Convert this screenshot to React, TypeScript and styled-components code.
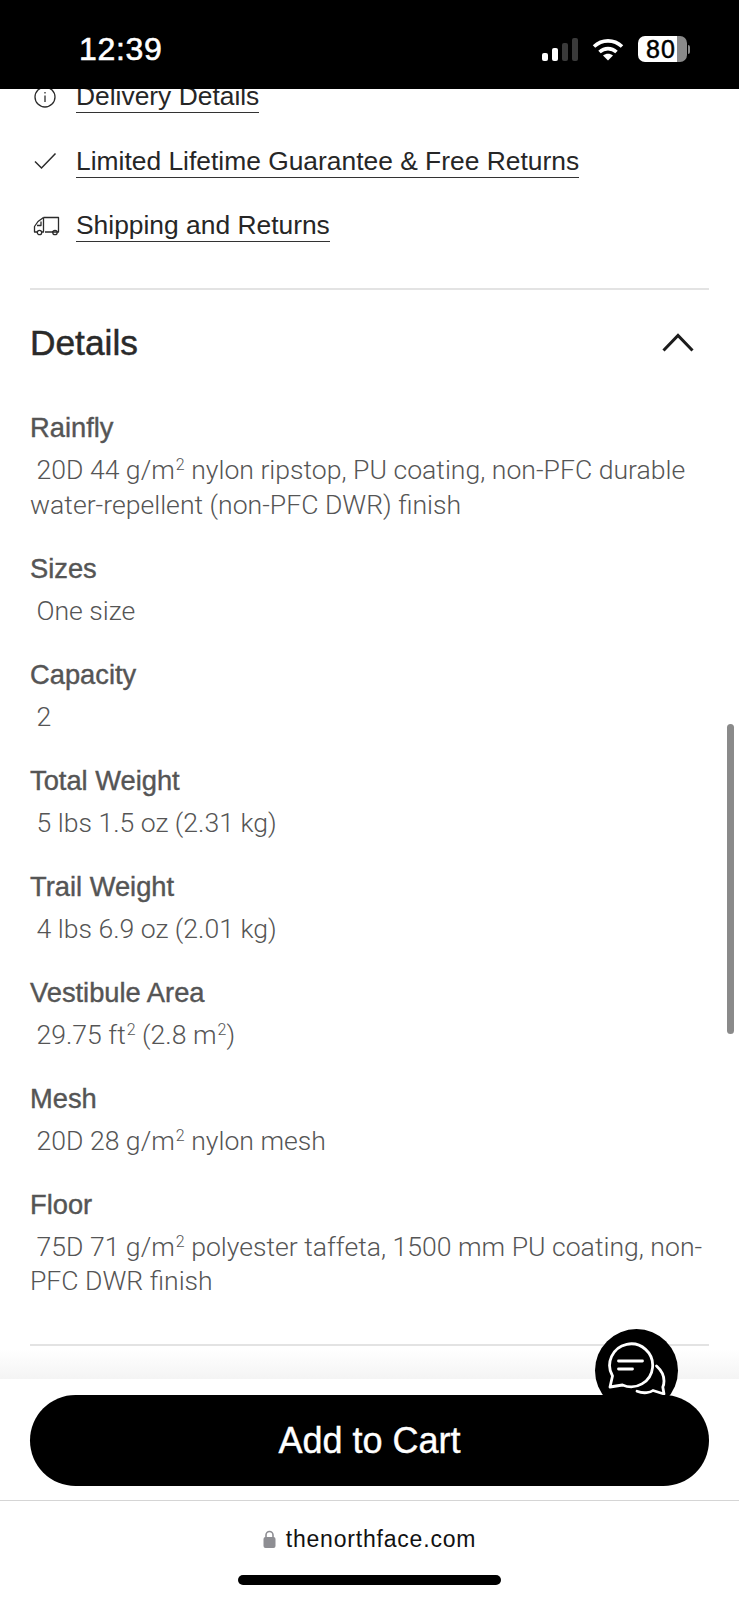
import React from 'react';
import styled, { createGlobalStyle } from 'styled-components';

const GlobalStyle = createGlobalStyle`
  html, body {
    margin: 0;
    padding: 0;
    background: #fff;
  }
  * {
    box-sizing: border-box;
  }
`;

interface ISpec {
  label: string;
  value: React.ReactNode;
}

const specs: ISpec[] = [
  {
    label: 'Rainfly',
    value: (
      <>
        {'\u00a0'}20D 44 g/m<sup>2</sup> nylon ripstop, PU coating, non-PFC durable water-repellent (non-PFC DWR) finish
      </>
    ),
  },
  { label: 'Sizes', value: '\u00a0One size' },
  { label: 'Capacity', value: '\u00a02' },
  { label: 'Total Weight', value: '\u00a05 lbs 1.5 oz (2.31 kg)' },
  { label: 'Trail Weight', value: '\u00a04 lbs 6.9 oz (2.01 kg)' },
  {
    label: 'Vestibule Area',
    value: (
      <>
        {'\u00a0'}29.75 ft<sup>2</sup> (2.8 m<sup>2</sup>)
      </>
    ),
  },
  {
    label: 'Mesh',
    value: (
      <>
        {'\u00a0'}20D 28 g/m<sup>2</sup> nylon mesh
      </>
    ),
  },
  {
    label: 'Floor',
    value: (
      <>
        {'\u00a0'}75D 71 g/m<sup>2</sup> polyester taffeta, 1500 mm PU coating, non-PFC DWR finish
      </>
    ),
  },
];

const InfoIcon = () => (
  <svg width="24" height="24" viewBox="0 0 24 24" fill="none" stroke="#2b2b2b" strokeWidth="1.3">
    <circle cx="12" cy="12" r="10" />
    <path d="M12 10.5v6.5" />
    <path d="M12 7v1.4" />
  </svg>
);

const CheckIcon = () => (
  <svg width="24" height="24" viewBox="0 0 24 24" fill="none" stroke="#2b2b2b" strokeWidth="1.5">
    <path d="M2 12.5l6.5 6.5L22.5 4.5" />
  </svg>
);

const TruckIcon = () => (
  <svg width="27" height="20" viewBox="0 0 27 20" fill="none" stroke="#2b2b2b" strokeWidth="1.3" strokeLinejoin="round">
    <path d="M10.5 1.5H25.5V16H12" />
    <path d="M10.5 1.5L5 5.5 1.5 10.5V16H4" />
    <path d="M10.5 1.5V16H9" />
    <path d="M4 9.5h4V5.5" />
    <path d="M20 16h-1" />
    <circle cx="6.5" cy="16.5" r="2.2" />
    <circle cx="22" cy="16.5" r="2.2" />
  </svg>
);

const ChevronIcon = () => (
  <svg width="32" height="19" viewBox="0 0 32 19" fill="none" stroke="#1c1c1c" strokeWidth="3">
    <path d="M1.5 17.5L16 2.5l14.5 15" />
  </svg>
);

const ChatIcon = () => (
  <svg width="60" height="60" viewBox="0 0 60 60" fill="none" stroke="#fff" strokeWidth="2.8" strokeLinejoin="round" strokeLinecap="round">
    <path d="M5.5 35A21.5 21.5 0 1 1 15.5 44L3 46z" />
    <path d="M11.5 20h24" />
    <path d="M11.5 28h14" />
    <path d="M49.5 25c4.5 4 7.5 10 7.5 15 0 2.500-.5 4.500-1.200 6L57 53l-11-3.500c-2.500 2-9 3.500-16 .8" />
  </svg>
);

const LockIcon = () => (
  <svg width="13" height="18" viewBox="0 0 13 18" fill="#8e8e93">
    <rect x="0.5" y="7" width="12" height="11" rx="2" />
    <path d="M3 8V5a3.500 3.500 0 017 0v3" fill="none" stroke="#8e8e93" strokeWidth="1.6" />
  </svg>
);

const WifiIcon = () => (
  <svg width="32" height="23" viewBox="0 0 32 23" fill="none" stroke="#fff" strokeWidth="3.6">
    <path d="M2 8.500C10 1 22 1 30 8.500" />
    <path d="M7.500 14c5-4.500 12-4.500 17 0" />
    <path d="M16 22.500l-5-5c3-2.400 7-2.400 10 0z" fill="#fff" stroke="none" />
  </svg>
);

export default function App() {
  return (
    <>
      <GlobalStyle />
      <Phone>
        <StatusBar>
          <Clock>12:39</Clock>
          <StatusIcons>
            <Signal>
              <SignalBar $height={8} $on />
              <SignalBar $height={13} $on />
              <SignalBar $height={18} />
              <SignalBar $height={23} />
            </Signal>
            <WifiIcon />
            <Battery>
              <BatteryBody>80</BatteryBody>
              <BatteryCap />
            </Battery>
          </StatusIcons>
        </StatusBar>

        <Content>
          <Links>
            <LinkRow>
              <LinkIcon>
                <InfoIcon />
              </LinkIcon>
              <LinkText>Delivery Details</LinkText>
            </LinkRow>
            <LinkRow>
              <LinkIcon>
                <CheckIcon />
              </LinkIcon>
              <LinkText>Limited Lifetime Guarantee &amp; Free Returns</LinkText>
            </LinkRow>
            <LinkRow>
              <LinkIcon>
                <TruckIcon />
              </LinkIcon>
              <LinkText>Shipping and Returns</LinkText>
            </LinkRow>
          </Links>

          <Section>
            <SectionHeader>
              <SectionTitle>Details</SectionTitle>
              <ChevronIcon />
            </SectionHeader>
            <SpecList>
              {specs.map(({ label, value }) => (
                <Spec key={label}>
                  <SpecLabel>{label}</SpecLabel>
                  <SpecValue>{value}</SpecValue>
                </Spec>
              ))}
            </SpecList>
          </Section>
          <EndRule />
          <ScrollThumb />
          <ChatButton>
            <ChatIcon />
          </ChatButton>
        </Content>

        <CartBar>
          <CartButton>Add to Cart</CartButton>
        </CartBar>

        <BrowserBar>
          <Address>
            <LockIcon />
            <span>thenorthface.com</span>
          </Address>
          <HomeIndicator />
        </BrowserBar>
      </Phone>
    </>
  );
}

const Phone = styled.div`
  width: 739px;
  height: 1600px;
  display: flex;
  flex-direction: column;
  overflow: hidden;
  background: #fff;
  font-family: 'Liberation Sans', Arial, sans-serif;
`;

const StatusBar = styled.header`
  flex: 0 0 89px;
  display: flex;
  align-items: center;
  justify-content: space-between;
  padding: 9px 49px 0 79px;
  background: #000;
  color: #fff;
  position: relative;
  z-index: 2;
`;

const Clock = styled.div`
  font-size: 32px;
  font-weight: 400;
  -webkit-text-stroke: 0.6px #fff;
  letter-spacing: 0.7px;
`;

const StatusIcons = styled.div`
  display: flex;
  align-items: center;
  gap: 14px;
`;

const Signal = styled.div`
  display: flex;
  align-items: flex-end;
  gap: 3.5px;
  height: 23px;
`;

const SignalBar = styled.span<{ $height: number; $on?: boolean }>`
  width: 6.5px;
  height: ${({ $height }) => $height}px;
  border-radius: 2px;
  background: ${({ $on }) => ($on ? '#fff' : '#3a3a3a')};
`;

const Battery = styled.div`
  display: flex;
  align-items: center;
  gap: 1px;
`;

const BatteryBody = styled.div`
  width: 49px;
  height: 26px;
  border-radius: 7px;
  background: linear-gradient(90deg, #fff 0 80%, #8a8a8a 80% 100%);
  color: #000;
  font-size: 25px;
  font-weight: 400;
  -webkit-text-stroke: 0.5px #000;
  letter-spacing: 1px;
  line-height: 26px;
  padding-left: 8px;
`;

const BatteryCap = styled.span`
  width: 2px;
  height: 9px;
  border-radius: 0 2px 2px 0;
  background: #8a8a8a;
`;

const Content = styled.main`
  flex: 1;
  min-height: 0;
  position: relative;
  padding: 0 30px;
  background: linear-gradient(180deg, #fff 0, #fff 1260px, #f4f4f4 100%);
`;

const Links = styled.div`
  display: flex;
  flex-direction: column;
  gap: 32px;
  margin-top: -8px;
  padding-bottom: 45.5px;
`;

const LinkRow = styled.div`
  display: flex;
  align-items: flex-start;
  height: 32.5px;
`;

const LinkIcon = styled.span`
  flex: 0 0 46px;
  height: 31px;
  display: flex;
  align-items: center;
  padding-left: 3px;
`;

const LinkText = styled.a`
  font-size: 26.4px;
  line-height: 31px;
  color: #262626;
  border-bottom: 1.5px solid #333;
`;

const Section = styled.section`
  border-top: 2px solid #e3e3e3;
`;

const SectionHeader = styled.div`
  display: flex;
  align-items: center;
  justify-content: space-between;
  height: 105px;
  margin-bottom: 18px;
  padding-right: 15px;
`;

const SectionTitle = styled.h2`
  margin: 0;
  font-size: 35.3px;
  font-weight: 400;
  -webkit-text-stroke: 0.5px #2a2a2a;
  color: #2a2a2a;
`;

const SpecList = styled.dl`
  margin: 0;
  display: flex;
  flex-direction: column;
  gap: 31.5px;
`;

const Spec = styled.div`
  display: flex;
  flex-direction: column;
  gap: 10px;
`;

const SpecLabel = styled.dt`
  font-size: 27.3px;
  line-height: 30px;
  color: #555;
  -webkit-text-stroke: 0.4px #555;
`;

const SpecValue = styled.dd`
  margin: 0;
  font-family: Roboto, 'Liberation Sans', sans-serif;
  font-weight: 300;
  font-size: 26.6px;
  line-height: 34.5px;
  color: #555;

  sup {
    font-size: 16px;
    line-height: 0;
    vertical-align: 9px;
    margin-left: 1px;
  }
`;

const EndRule = styled.hr`
  margin: 45px 0 0;
  border: 0;
  border-top: 2px solid #e3e3e3;
`;

const ScrollThumb = styled.div`
  position: absolute;
  top: 635px;
  right: 5px;
  width: 7px;
  height: 310px;
  border-radius: 4px;
  background: #8a8a8a;
`;

const ChatButton = styled.div`
  position: absolute;
  z-index: 1;
  top: 1240px;
  left: 595px;
  width: 83px;
  height: 83px;
  border-radius: 50%;
  background: #000;
  display: flex;
  align-items: center;
  justify-content: center;
`;

const CartBar = styled.div`
  flex: 0 0 122px;
  padding: 16px 30px 0;
  background: #fff;
  border-bottom: 1px solid #d5d5d5;
`;

const CartButton = styled.button`
  position: relative;
  z-index: 2;
  display: block;
  width: 100%;
  height: 91px;
  border: 0;
  border-radius: 46px;
  background: #000;
  color: #fff;
  font-family: inherit;
  font-size: 36px;
  -webkit-text-stroke: 0.4px #fff;
`;

const BrowserBar = styled.footer`
  flex: 0 0 99px;
  display: flex;
  flex-direction: column;
  align-items: center;
  padding-top: 25px;
  background: #fff;
`;

const Address = styled.div`
  display: flex;
  align-items: center;
  gap: 10px;
  height: 26px;
  font-size: 23px;
  letter-spacing: 0.8px;
  color: #111;
`;

const HomeIndicator = styled.div`
  margin-top: 23px;
  width: 263px;
  height: 10px;
  border-radius: 5px;
  background: #000;
`;
